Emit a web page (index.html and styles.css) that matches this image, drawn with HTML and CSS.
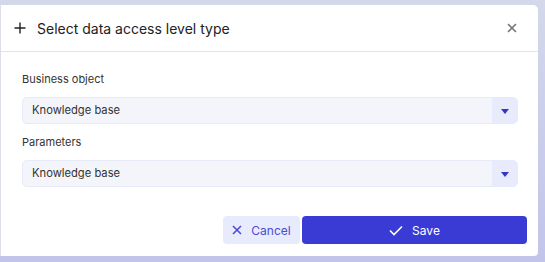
FILE: index.html
```html
<!DOCTYPE html>
<html lang="en">
<head>
    <meta charset="UTF-8">
    <meta name="viewport" content="width=device-width, initial-scale=1.0">
    <title>Select data access level type</title>
    <link rel="stylesheet" href="styles.css">
</head>
<body>
    <!-- Dialog -->
    <div class="dialog">
        <div class="dialog-header">
            <svg class="plus-icon" width="12" height="12" viewBox="0 0 12 12">
                <path d="M6 0.5V11.5M0.5 6H11.5" stroke="#222" stroke-width="1.4" fill="none"/>
            </svg>
            <h2>Select data access level type</h2>
            <span class="close-btn">
                <svg width="10" height="10" viewBox="0 0 10 10">
                    <path d="M1 1L9 9M9 1L1 9" stroke="#777" stroke-width="1.6" fill="none"/>
                </svg>
            </span>
        </div>

        <div class="dialog-body">
            <div class="form-group">
                <label>Business object</label>
                <div class="select">
                    <span class="select-value">Knowledge base</span>
                    <span class="select-arrow"></span>
                </div>
            </div>

            <div class="form-group">
                <label>Parameters</label>
                <div class="select">
                    <span class="select-value">Knowledge base</span>
                    <span class="select-arrow"></span>
                </div>
            </div>
        </div>

        <div class="dialog-footer">
            <button class="cancel-btn">
                <svg width="10" height="10" viewBox="0 0 10 10">
                    <path d="M1 1L9 9M9 1L1 9" stroke="#4b4bd6" stroke-width="1.6" fill="none"/>
                </svg>
                Cancel
            </button>
            <button class="save-btn">
                <svg width="14" height="11" viewBox="0 0 14 11">
                    <path d="M1 5.5L5 9.5L13 1.5" stroke="#fff" stroke-width="1.6" fill="none"/>
                </svg>
                Save
            </button>
        </div>
    </div>
</body>
</html>
```

FILE: styles.css
```css
body {
    font-family: Inter, 'Noto Sans', sans-serif;
    background: linear-gradient(#d4d8ea, #c2c4ea);
    margin: 0;
    padding: 5px 7px 0 0;
    height: 262px;
    box-sizing: border-box;
    overflow: hidden;
}

/* Dialog */
.dialog {
    background-color: #fff;
    height: 251px;
    border-left: 1px solid #dcdde6;
    border-radius: 0 5px 4px 0;
    display: flex;
    flex-direction: column;
}

.dialog-header {
    height: 46px;
    display: flex;
    align-items: center;
    padding: 0 21px 0 13px;
    border-bottom: 1px solid #e3e3e6;
}

.plus-icon {
    margin-right: 11px;
}

h2 {
    flex: 1;
    margin: 0;
    font-size: 14px;
    font-weight: 400;
    color: #222;
}

.close-btn {
    display: flex;
    cursor: pointer;
}

.dialog-body {
    padding: 20px 20px 0 21px;
}

.form-group {
    margin-bottom: 11px;
}

label {
    display: block;
    font-size: 11px;
    color: #333;
    line-height: 15px;
    margin-bottom: 10px;
}

.select {
    display: flex;
    height: 27px;
    border: 1px solid #e7eaf8;
    border-radius: 5px;
    background-color: #f4f5fa;
    box-sizing: border-box;
    overflow: hidden;
}

.select-value {
    flex: 1;
    font-size: 11.2px;
    color: #333;
    line-height: 25px;
    padding-left: 9px;
}

.select-arrow {
    width: 25px;
    background-color: #e8ebfc;
    display: flex;
    align-items: center;
    justify-content: center;
}

.select-arrow::after {
    content: '';
    border-left: 4px solid transparent;
    border-right: 4px solid transparent;
    border-top: 5px solid #3535c8;
    margin-top: 1px;
}

/* Footer */
.dialog-footer {
    margin-top: auto;
    display: flex;
    justify-content: flex-end;
    gap: 2px;
    padding: 0 11px 12px 0;
}

button {
    height: 28px;
    border: none;
    border-radius: 4px;
    font-family: inherit;
    font-size: 12px;
    display: flex;
    align-items: center;
    justify-content: center;
    cursor: pointer;
}

.cancel-btn {
    width: 77px;
    background-color: #e8ebfc;
    color: #4b4bd6;
    gap: 9px;
}

.save-btn {
    width: 225px;
    background-color: #3a3ad4;
    color: #fff;
    gap: 9px;
}
```
